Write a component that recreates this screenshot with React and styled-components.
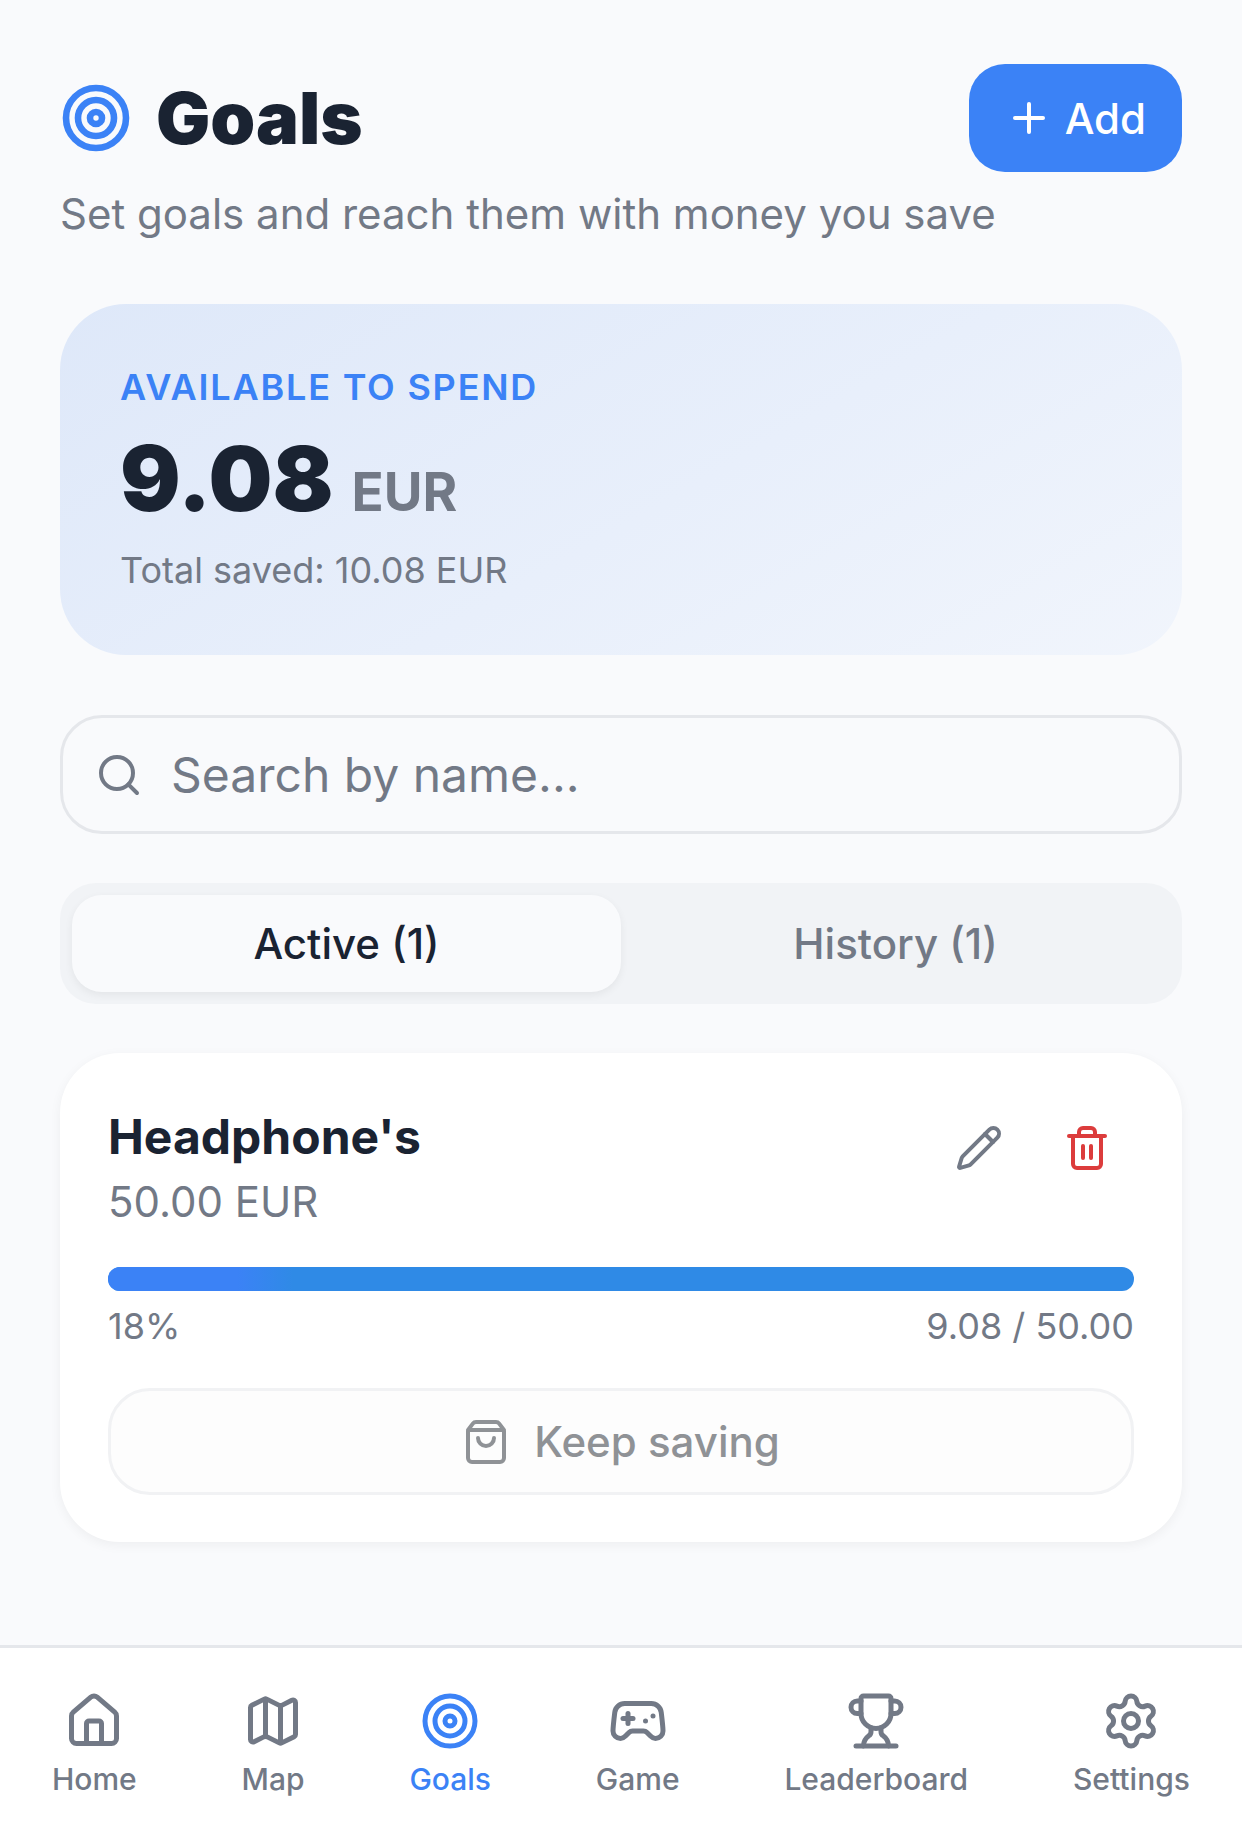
import styled, { createGlobalStyle } from "styled-components";
import { Target, Plus, Search, Pencil, Trash2, ShoppingBag, House, Map, Gamepad2, Trophy, Settings } from "lucide-react";

const GlobalStyle = createGlobalStyle`
  * { box-sizing: border-box; }
  body {
    margin: 0;
    background: #f9fafc;
    font-family: Inter, "Liberation Sans", sans-serif;
    color: #1a2332;
  }
`;

const Page = styled.div`
  display: flex;
  flex-direction: column;
  min-height: 100vh;
`;
const Main = styled.main`
  flex: 1;
  padding: 64px 60px 0;
`;
const Header = styled.div`
  display: flex;
  justify-content: space-between;
  align-items: center;
`;
const TitleRow = styled.div`
  display: flex;
  align-items: center;
  gap: 24px;
  color: #3b82f6;
`;
const Title = styled.h1`
  margin: 0;
  font-size: 72px;
  font-weight: 900;
  line-height: 80px;
  color: #1a2332;
`;
const AddButton = styled.button`
  display: flex;
  align-items: center;
  gap: 12px;
  height: 108px;
  padding: 0 36px;
  border: none;
  border-radius: 36px;
  background: #3b82f6;
  color: #fff;
  font: 500 42px Inter, sans-serif;
`;
const Subtitle = styled.p`
  margin: 16px 0 0;
  font-size: 42px;
  line-height: 52px;
  color: #727986;
`;
const BalanceCard = styled.section`
  height: 351px;
  margin-top: 64px;
  padding: 61px 60px 60px;
  border-radius: 66px;
  background: linear-gradient(150deg, #dee8f9 0%, #e8effb 55%, #f1f5fc 100%);
`;
const BalanceLabel = styled.div`
  font-size: 36px;
  font-weight: 600;
  line-height: 44px;
  letter-spacing: 1.8px;
  color: #3b82f6;
`;
const BalanceRow = styled.div`
  display: flex;
  align-items: baseline;
  gap: 18px;
  margin-top: 20px;
`;
const Amount = styled.span`
  font-size: 90px;
  font-weight: 900;
  line-height: 100px;
`;
const Currency = styled.span`
  font-size: 53px;
  font-weight: 700;
  color: #727986;
`;
const Saved = styled.div`
  margin-top: 19px;
  font-size: 36px;
  line-height: 44px;
  color: #727986;
`;
const SearchBox = styled.div`
  display: flex;
  align-items: center;
  gap: 28px;
  height: 119px;
  margin-top: 60px;
  padding: 0 32px;
  border: 3px solid #e5e7eb;
  border-radius: 42px;
  color: #727986;
  font-size: 48px;
`;
const Tabs = styled.div`
  display: flex;
  height: 121px;
  margin-top: 49px;
  padding: 12px;
  border-radius: 36px;
  background: #f1f3f6;
`;
const Tab = styled.div`
  flex: 1;
  display: flex;
  align-items: center;
  justify-content: center;
  border-radius: 30px;
  font-size: 42px;
  font-weight: 500;
  color: ${(p) => (p.$active ? "#1a2332" : "#727986")};
  background: ${(p) => (p.$active ? "#f9fafc" : "transparent")};
  box-shadow: ${(p) => (p.$active ? "0 3px 9px rgba(0,0,0,.06)" : "none")};
`;
const GoalCard = styled.article`
  height: 489px;
  margin-top: 49px;
  padding: 55px 48px 48px;
  border-radius: 60px;
  background: #fff;
  box-shadow: 0 3px 12px rgba(0,0,0,.05);
`;
const GoalTop = styled.div`
  display: flex;
  justify-content: space-between;
`;
const GoalName = styled.h2`
  margin: 0;
  font-size: 48px;
  font-weight: 700;
  line-height: 58px;
`;
const GoalPrice = styled.div`
  margin-top: 10px;
  font-size: 42px;
  line-height: 52px;
  color: #727986;
`;
const Actions = styled.div`
  display: flex;
  gap: 60px;
  padding: 16px 23px 0 0;
`;
const Track = styled.div`
  height: 24px;
  margin-top: 39px;
  border-radius: 12px;
  background: #2f8ae6;
  overflow: hidden;
`;
const Fill = styled.div`
  height: 100%;
  background: linear-gradient(90deg, #3b82f6 70%, #2f8ae6);
`;
const ProgressRow = styled.div`
  display: flex;
  justify-content: space-between;
  margin-top: 12px;
  font-size: 36px;
  line-height: 46px;
  color: #727986;
`;
const SaveButton = styled.button`
  display: flex;
  align-items: center;
  justify-content: center;
  gap: 24px;
  width: 100%;
  height: 107px;
  margin-top: 39px;
  border: 3px solid #f1f2f4;
  border-radius: 42px;
  background: #fdfdfd;
  color: #8f9296;
  font: 500 42px Inter, sans-serif;
`;
const Nav = styled.nav`
  display: flex;
  justify-content: space-between;
  height: 196px;
  padding: 43px 52px 0;
  border-top: 3px solid #e5e7eb;
  background: #fff;
`;
const NavItem = styled.div`
  display: flex;
  flex-direction: column;
  align-items: center;
  gap: 10px;
  font-size: 30px;
  font-weight: 500;
  line-height: 36px;
  color: ${(p) => (p.$active ? "#3b82f6" : "#727986")};
`;

const navItems = [
  { label: "Home", Icon: House },
  { label: "Map", Icon: Map },
  { label: "Goals", Icon: Target, active: true },
  { label: "Game", Icon: Gamepad2 },
  { label: "Leaderboard", Icon: Trophy },
  { label: "Settings", Icon: Settings },
];

export default function App() {
  return (
    <Page>
      <GlobalStyle />
      <Main>
        <Header>
          <TitleRow>
            <Target size={72} strokeWidth={2.2} />
            <Title>Goals</Title>
          </TitleRow>
          <AddButton>
            <Plus size={48} strokeWidth={2} />
            Add
          </AddButton>
        </Header>
        <Subtitle>Set goals and reach them with money you save</Subtitle>
        <BalanceCard>
          <BalanceLabel>AVAILABLE TO SPEND</BalanceLabel>
          <BalanceRow>
            <Amount>9.08</Amount>
            <Currency>EUR</Currency>
          </BalanceRow>
          <Saved>Total saved: 10.08 EUR</Saved>
        </BalanceCard>
        <SearchBox>
          <Search size={48} strokeWidth={2} />
          Search by name...
        </SearchBox>
        <Tabs>
          <Tab $active>Active (1)</Tab>
          <Tab>History (1)</Tab>
        </Tabs>
        <GoalCard>
          <GoalTop>
            <div>
              <GoalName>Headphone's</GoalName>
              <GoalPrice>50.00 EUR</GoalPrice>
            </div>
            <Actions>
              <Pencil size={48} color="#727986" strokeWidth={2} />
              <Trash2 size={48} color="#dc3c3c" strokeWidth={2} />
            </Actions>
          </GoalTop>
          <Track>
            <Fill style={{ width: "18%" }} />
          </Track>
          <ProgressRow>
            <span>18%</span>
            <span>9.08 / 50.00</span>
          </ProgressRow>
          <SaveButton>
            <ShoppingBag size={48} strokeWidth={2} />
            Keep saving
          </SaveButton>
        </GoalCard>
      </Main>
      <Nav>
        {navItems.map(({ label, Icon, active }) => (
          <NavItem key={label} $active={active}>
            <Icon size={60} strokeWidth={2} />
            {label}
          </NavItem>
        ))}
      </Nav>
    </Page>
  );
}
